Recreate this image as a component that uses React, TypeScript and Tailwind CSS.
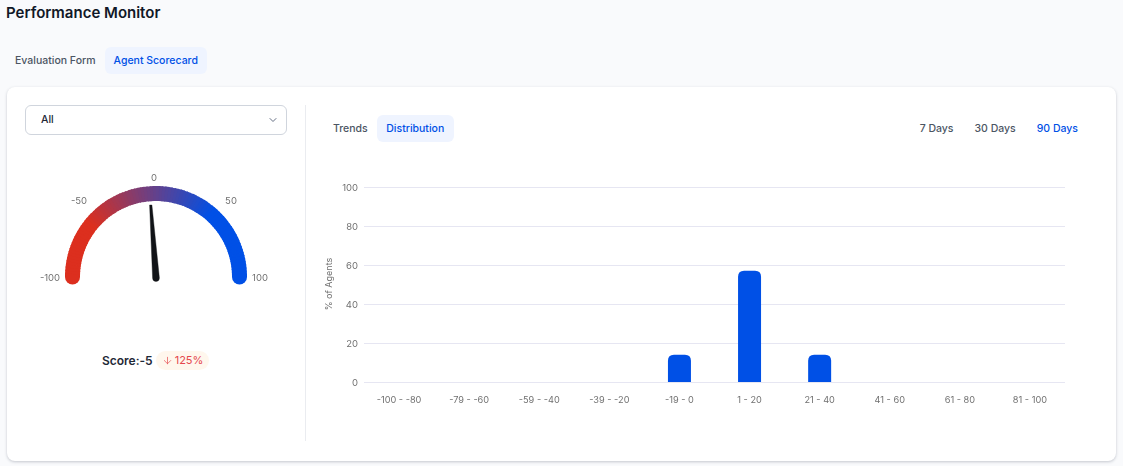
import React from "react";
import { ArrowDown, ChevronDown } from "lucide-react";

const font = { fontFamily: "Inter, sans-serif" };

const yTicks = [100, 80, 60, 40, 20, 0];
const categories = [
  { label: "-100 - -80", value: 0 },
  { label: "-79 - -60", value: 0 },
  { label: "-59 - -40", value: 0 },
  { label: "-39 - -20", value: 0 },
  { label: "-19 - 0", value: 14 },
  { label: "1 - 20", value: 57 },
  { label: "21 - 40", value: 14 },
  { label: "41 - 60", value: 0 },
  { label: "61 - 80", value: 0 },
  { label: "81 - 100", value: 0 },
];

const RED = [220, 47, 30];
const BLUE = [0, 80, 230];

// colour along the arc, t = 0 at the left end and 180 at the right end
const gaugeColor = (deg: number) => {
  const t = Math.min(1, Math.max(0, (deg - 38) / (130 - 38)));
  const c = RED.map((v, i) => Math.round(v + (BLUE[i] - v) * t));
  return `rgb(${c[0]},${c[1]},${c[2]})`;
};

const Gauge = () => {
  const cx = 131;
  const cy = 112;
  const r = 83.5;
  const point = (deg: number) => {
    const a = (deg * Math.PI) / 180;
    return `${cx - r * Math.cos(a)} ${cy - r * Math.sin(a)}`;
  };
  const steps = Array.from({ length: 90 }, (_, i) => i * 2);

  return (
    <svg viewBox="0 0 262 130" className="block w-[262px] h-[130px] will-change-transform">
      <circle cx={cx - r} cy={cy} r={7.5} fill={gaugeColor(0)} />
      <circle cx={cx + r} cy={cy} r={7.5} fill={gaugeColor(180)} />
      {steps.map((deg) => (
        <path
          key={deg}
          d={`M${point(deg)} A${r} ${r} 0 0 1 ${point(Math.min(180, deg + 2.6))}`}
          fill="none"
          stroke={gaugeColor(deg)}
          strokeWidth={15}
        />
      ))}
      <path
        d="M124.6 40 L126.9 40 L134.4 113 A3.4 3.4 0 0 1 127.6 113 Z"
        fill="#111317"
        stroke="#111317"
        strokeWidth={0.4}
        strokeLinejoin="round"
      />
      <g fontSize={9.5} fill="#707070" style={font}>
        <text x={129} y={15.5} textAnchor="middle">0</text>
        <text x={54} y={38.5} textAnchor="middle">-50</text>
        <text x={206} y={38.5} textAnchor="middle">50</text>
        <text x={25} y={115.5} textAnchor="middle">-100</text>
        <text x={235} y={115.5} textAnchor="middle">100</text>
      </g>
    </svg>
  );
};

const DistributionChart = () => {
  const left = 40;
  const step = 70.1;
  const base = 222;
  const scale = 1.95;

  return (
    <svg viewBox="0 0 774 260" className="block w-[774px] h-[260px] will-change-transform">
      {yTicks.map((tick) => {
        const y = base - tick * scale;
        return (
          <g key={tick}>
            <line x1={left} x2={741} y1={y + 0.5} y2={y + 0.5} stroke="#e6e6f2" />
            <text x={34} y={y + 3.5} textAnchor="end" fontSize={9.5} fill="#707070" style={font}>
              {tick}
            </text>
          </g>
        );
      })}
      {categories.map((cat, i) => {
        const x = left + step * i + step / 2;
        const h = cat.value * scale;
        return (
          <g key={cat.label}>
            {h > 0 && (
              <path
                d={`M${x - 11.5} ${base} V${base - h + 6} Q${x - 11.5} ${base - h} ${x - 5.5} ${base - h} H${x + 5.5} Q${x + 11.5} ${base - h} ${x + 11.5} ${base - h + 6} V${base} Z`}
                fill="#0050e6"
              />
            )}
            <text x={x} y={243} textAnchor="middle" fontSize={9.2} fill="#707070" style={font}>
              {cat.label}
            </text>
          </g>
        );
      })}
      <text
        transform="translate(7.5 124) rotate(-90)"
        textAnchor="middle"
        fontSize={9}
        fill="#707070"
        style={font}
      >
        % of Agents
      </text>
    </svg>
  );
};

export default function App() {
  return (
    <div className="h-[466px] overflow-hidden bg-[#f9fafc]" style={font}>
      <h1 className="pl-[6px] pt-[3px] text-[15px] leading-5 font-semibold text-[#111827]">
        Performance Monitor
      </h1>

      <div className="flex items-center pl-[6px] mt-6">
        <button className="h-[27px] px-[9px] rounded-md text-[10.5px] font-[450] text-[#4b5563]">
          Evaluation Form
        </button>
        <button className="h-[27px] px-[9px] rounded-md bg-[#eff4ff] text-[10.5px] font-[450] text-[#0050e6]">
          Agent Scorecard
        </button>
      </div>

      <div className="flex ml-[7px] mt-[13px] w-[1109px] h-[374px] rounded-lg bg-white shadow-[0_1px_3px_rgba(60,70,90,0.28)] p-[18px] pb-[20px]">
        <div className="w-[262px] shrink-0">
          <div className="flex items-center justify-between h-[30px] pl-[15px] pr-[7px] rounded-md border border-[#d0d5dd] text-[10.5px] font-[450] text-[#1f2937]">
            <span>All</span>
            <ChevronDown className="w-3 h-3 text-[#667085]" />
          </div>
          <div className="mt-[30px]">
            <Gauge />
          </div>
          <div className="flex items-center mt-[56px] pl-[77px]">
            <span className="text-[12px] font-semibold text-[#1f2937]">Score:-5</span>
            <span className="flex items-center gap-[2px] ml-[3px] h-[19px] px-[6px] rounded-full bg-[#fff7ed] text-[11px] text-[#e5484d]">
              <ArrowDown className="w-[11px] h-[11px]" strokeWidth={1.5} />
              125%
            </span>
          </div>
        </div>

        <div className="w-px shrink-0 ml-[18px] bg-[#eaecf0]" />

        <div className="flex-1 pl-[18px] pt-[10px]">
          <div className="flex items-center justify-between pr-[20px]">
            <div className="flex items-center">
              <button className="h-[27px] px-[9px] text-[10.5px] font-[450] text-[#4b5563]">
                Trends
              </button>
              <button className="h-[27px] px-[9.5px] rounded-md bg-[#eff4ff] text-[10.5px] font-[450] text-[#0050e6]">
                Distribution
              </button>
            </div>
            <div className="flex items-center gap-[21px] text-[10.5px] font-[450] text-[#4b5563]">
              <span>7 Days</span>
              <span>30 Days</span>
              <span className="text-[#0050e6]">90 Days</span>
            </div>
          </div>
          <div className="mt-[18px]">
            <DistributionChart />
          </div>
        </div>
      </div>
    </div>
  );
}
